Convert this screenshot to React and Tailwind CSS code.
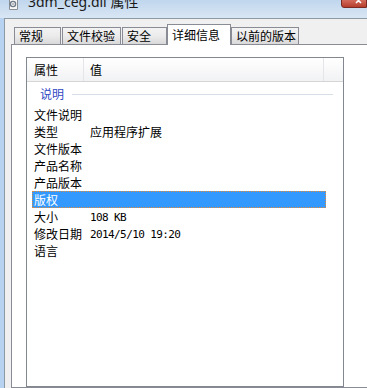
import React from "react";

const rows = [
  ["文件说明", ""],
  ["类型", "应用程序扩展"],
  ["文件版本", ""],
  ["产品名称", ""],
  ["产品版本", ""],
  ["版权", "", true],
  ["大小", "108 KB"],
  ["修改日期", "2014/5/10 19:20"],
  ["语言", ""],
];

function Val({ v }) {
  if (/^[\x00-\x7f]+$/.test(v) && v) {
    return (
      <span className="font-['DejaVu_Sans_Mono',monospace] text-[11px] tracking-[-0.6px]">{v}</span>
    );
  }
  return <span>{v}</span>;
}

export default function App() {
  const cjk = "font-['Noto_Sans_CJK_SC','Noto_Sans',sans-serif]";
  return (
    <div className={`w-[367px] h-[388px] overflow-hidden bg-[#f0f0f0] flex flex-col ${cjk} text-[12px] text-black`}>
      {/* title bar */}
      <div className="h-[18px] shrink-0 flex bg-gradient-to-b from-[#c0d6ed] to-[#d9e6f4] overflow-hidden relative">
        <div className="ml-[8px] -mt-[3px] w-[11px] h-[13px]">
          <svg width="11" height="13" viewBox="0 0 11 13">
            <path d="M1.5 0.5 H7 L9.5 3 V12.5 H1.5 Z" fill="#f7f7f7" stroke="#8a8f96" />
            <circle cx="5" cy="7" r="2.6" fill="none" stroke="#6e7a88" strokeWidth="1.4" />
            <circle cx="5" cy="7" r="0.8" fill="#6e7a88" />
          </svg>
        </div>
        <div className="ml-[9px] -mt-[7px] text-[14px] leading-[18px] text-[#1a1a1a] font-['Noto_Sans','Noto_Sans_CJK_SC',sans-serif] whitespace-nowrap">
          3dm_ceg.dll 属性
        </div>
        <div className="flex-1" />
        <div className="w-[26px] h-[9px] -mt-px rounded-bl-[3px] border border-[#7a2c24] bg-gradient-to-b from-[#d26b5c] to-[#b63d2c] overflow-hidden">
          <svg width="24" height="8" viewBox="0 0 24 8">
            <path d="M14 -2 L19 3 M19 -2 L14 3" stroke="#ffffff" strokeWidth="1.6" />
          </svg>
        </div>
      </div>
      {/* body */}
      <div className="flex-1 flex min-h-0">
        <div className="w-[4px] bg-[#b7d3f1] shrink-0" />
        <div className="flex-1 border-l border-t border-[#8e99a6] flex flex-col pt-[6px] pl-[6px] min-w-0">
          {/* tabs */}
          <div className="flex items-end pl-[3px] h-[20px] shrink-0 relative z-10 -mb-px">
            {[
              ["常规", "w-[47px]", "mr-[1px]"],
              ["文件校验", "w-[59px]", "mr-[1px]"],
              ["安全", "w-[45px]", ""],
            ].map(([t, w, m]) => (
              <div
                key={t}
                className={`${w} ${m} h-[18px] border border-[#898c95] bg-gradient-to-b from-[#f3f3f3] via-[#ebebeb] to-[#d9d9d9] pl-[4px] leading-[16px] whitespace-nowrap`}
              >
                {t}
              </div>
            ))}
            <div className="w-[64px] h-[21px] border border-b-0 border-[#898c95] bg-white pl-[4px] leading-[19px] whitespace-nowrap">
              详细信息
            </div>
            <div className="w-[68px] h-[18px] border border-[#898c95] bg-gradient-to-b from-[#f3f3f3] via-[#ebebeb] to-[#d9d9d9] pl-[4px] leading-[16px] whitespace-nowrap">
              以前的版本
            </div>
          </div>
          {/* page */}
          <div className="flex-1 w-[400px] border border-[#898c95] bg-white pt-[12px] pl-[14px] min-h-0">
            <div className="w-[318px] h-[330px] border border-[#828790] bg-white flex flex-col">
              {/* header */}
              <div className="h-[24px] shrink-0 flex border-b border-[#d5d5d5] bg-gradient-to-b from-white to-[#f1f2f4]">
                <div className="w-[57px] border-r border-[#e3e5e8] pl-[7px] leading-[23px]">属性</div>
                <div className="w-[240px] border-r border-[#e3e5e8] pl-[6px] leading-[23px]">值</div>
                <div className="flex-1" />
              </div>
              {/* group */}
              <div className="h-[24px] shrink-0 flex items-center pl-[13px] pr-[10px]">
                <span className="text-[#3048c6] leading-[22px]">说明</span>
                <div className="flex-1 ml-[8px] h-px bg-[#d6dee7]" />
              </div>
              {rows.map(([k, v, sel]) => (
                <div
                  key={k}
                  className={`h-[17px] ml-[5px] w-[294px] flex items-center leading-[17px] ${
                    sel ? "bg-[#3399ff] text-white outline-1 outline-dotted outline-[#e08a3a] -outline-offset-1" : ""
                  }`}
                >
                  <div className="w-[58px] pl-[2px] whitespace-nowrap">{k}</div>
                  <div className="whitespace-nowrap">
                    <Val v={v} />
                  </div>
                </div>
              ))}
            </div>
          </div>
        </div>
      </div>
    </div>
  );
}
